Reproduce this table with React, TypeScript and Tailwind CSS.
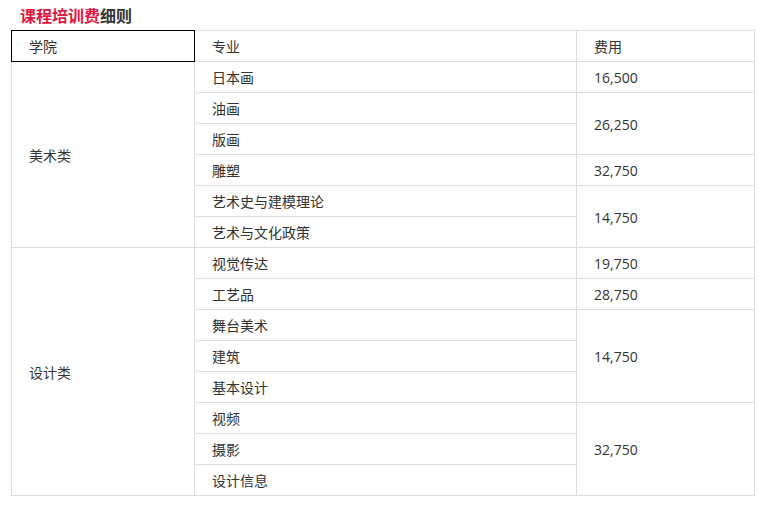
type Group = { fee: string; items: string[] };
type College = { name: string; groups: Group[] };

const data: College[] = [
  {
    name: "美术类",
    groups: [
      { fee: "16,500", items: ["日本画"] },
      { fee: "26,250", items: ["油画", "版画"] },
      { fee: "32,750", items: ["雕塑"] },
      { fee: "14,750", items: ["艺术史与建模理论", "艺术与文化政策"] },
    ],
  },
  {
    name: "设计类",
    groups: [
      { fee: "19,750", items: ["视觉传达"] },
      { fee: "28,750", items: ["工艺品"] },
      { fee: "14,750", items: ["舞台美术", "建筑", "基本设计"] },
      { fee: "32,750", items: ["视频", "摄影", "设计信息"] },
    ],
  },
];

const cell = "h-[31px] border border-[#dddddd] px-[17px] pt-[2px] pb-0 align-middle";

export default function App() {
  const rows: JSX.Element[] = [];
  data.forEach((college) => {
    const total = college.groups.reduce((n, g) => n + g.items.length, 0);
    college.groups.forEach((g, gi) => {
      g.items.forEach((item, ii) => {
        rows.push(
          <tr key={college.name + item}>
            {gi === 0 && ii === 0 && (
              <td rowSpan={total} className={cell}>
                {college.name}
              </td>
            )}
            <td className={cell}>{item}</td>
            {ii === 0 && (
              <td rowSpan={g.items.length} className={cell}>
                {g.fee}
              </td>
            )}
          </tr>
        );
      });
    });
  });

  return (
    <div
      className="min-h-[508px] bg-white px-[11px] pt-[5px] text-[14px] text-[#333333]"
      style={{ fontFamily: '"Open Sans", "Noto Sans CJK SC", sans-serif' }}
    >
      <h2 className="mb-[3px] pl-[9px] text-[16px] font-bold leading-[22px]">
        <span className="text-[#e0163f]">课程培训费</span>
        <span className="text-[#333333]">细则</span>
      </h2>
      <table className="w-[743px] table-fixed border-collapse leading-[20px]">
        <colgroup>
          <col className="w-[183px]" />
          <col className="w-[382px]" />
          <col className="w-[178px]" />
        </colgroup>
        <thead>
          <tr>
            <th className="h-[31px] border border-black px-[17px] pt-[2px] pb-0 text-left font-normal">学院</th>
            <th className="h-[31px] border border-[#dddddd] px-[17px] pt-[2px] pb-0 text-left font-normal">专业</th>
            <th className="h-[31px] border border-[#dddddd] px-[17px] pt-[2px] pb-0 text-left font-normal">费用</th>
          </tr>
        </thead>
        <tbody>{rows}</tbody>
      </table>
    </div>
  );
}
